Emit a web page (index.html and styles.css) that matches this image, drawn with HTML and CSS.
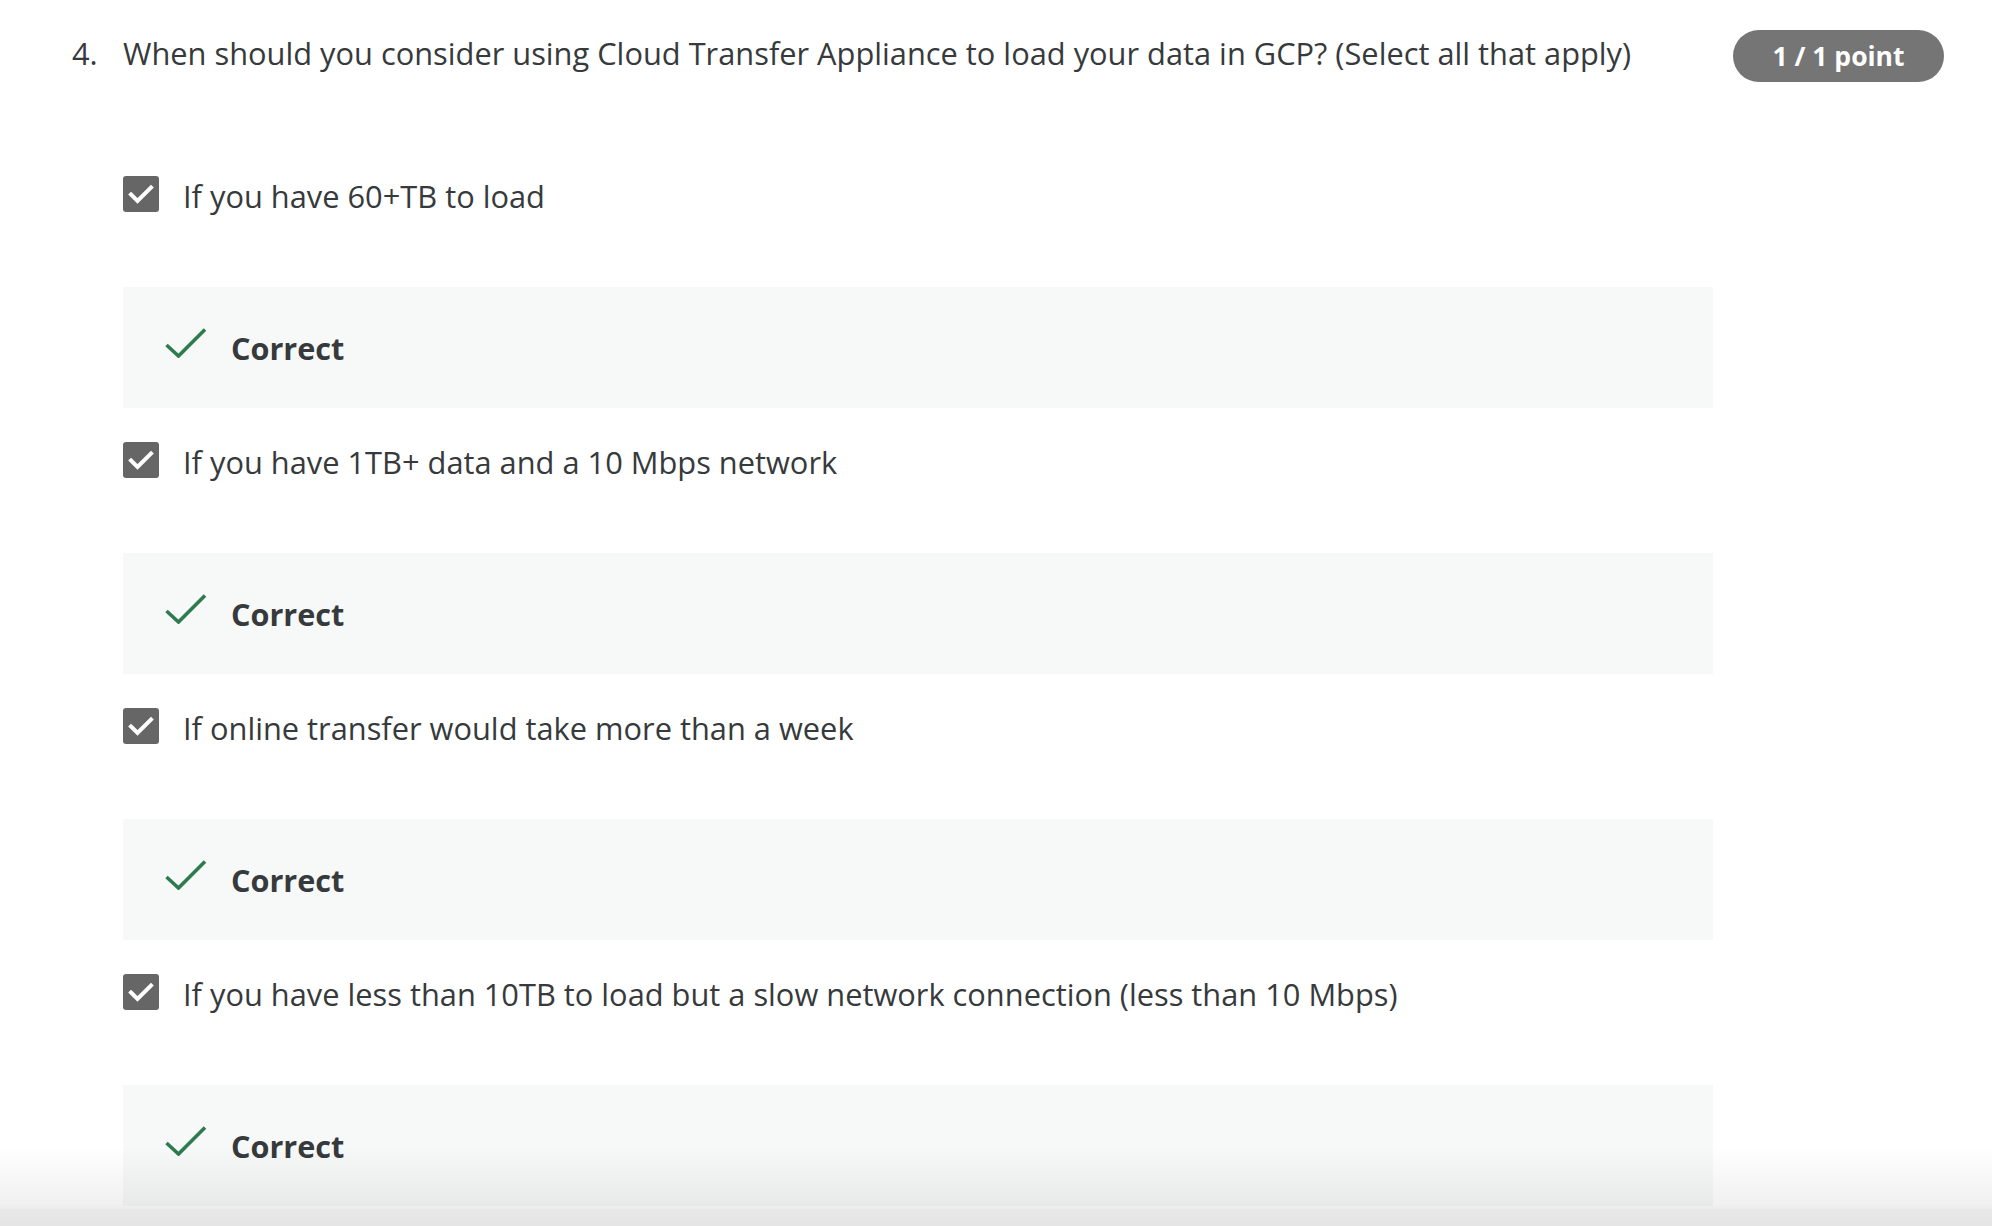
FILE: index.html
```html
<!DOCTYPE html>
<html>
<head>
<meta charset="utf-8">
<link rel="stylesheet" href="styles.css">
</head>
<body>
<div class="question">
  <div class="q-head">
    <div class="q-num">4.</div>
    <div class="q-text">When should you consider using Cloud Transfer Appliance to load your data in GCP? (Select all that apply)</div>
    <div class="badge">1 / 1 point</div>
  </div>
  <div class="options">
    <div class="group">
      <div class="option">
        <span class="cbox"><svg width="36" height="36" viewBox="0 0 36 36"><polyline points="8,18.5 14.5,25 28,11.5" fill="none" stroke="#fff" stroke-width="4" stroke-linecap="square"/></svg></span>
        <span class="opt-text">If you have 60+TB to load</span>
      </div>
      <div class="feedback">
        <svg class="tick" width="42" height="30" viewBox="0 0 42 30"><polyline points="1.5,17 13.5,28 40,1.5" fill="none" stroke="#2f7b50" stroke-width="3.6"/></svg>
        <span class="fb-text">Correct</span>
      </div>
    </div>
    <div class="group">
      <div class="option">
        <span class="cbox"><svg width="36" height="36" viewBox="0 0 36 36"><polyline points="8,18.5 14.5,25 28,11.5" fill="none" stroke="#fff" stroke-width="4" stroke-linecap="square"/></svg></span>
        <span class="opt-text">If you have 1TB+ data and a 10 Mbps network</span>
      </div>
      <div class="feedback">
        <svg class="tick" width="42" height="30" viewBox="0 0 42 30"><polyline points="1.5,17 13.5,28 40,1.5" fill="none" stroke="#2f7b50" stroke-width="3.6"/></svg>
        <span class="fb-text">Correct</span>
      </div>
    </div>
    <div class="group">
      <div class="option">
        <span class="cbox"><svg width="36" height="36" viewBox="0 0 36 36"><polyline points="8,18.5 14.5,25 28,11.5" fill="none" stroke="#fff" stroke-width="4" stroke-linecap="square"/></svg></span>
        <span class="opt-text">If online transfer would take more than a week</span>
      </div>
      <div class="feedback">
        <svg class="tick" width="42" height="30" viewBox="0 0 42 30"><polyline points="1.5,17 13.5,28 40,1.5" fill="none" stroke="#2f7b50" stroke-width="3.6"/></svg>
        <span class="fb-text">Correct</span>
      </div>
    </div>
    <div class="group">
      <div class="option">
        <span class="cbox"><svg width="36" height="36" viewBox="0 0 36 36"><polyline points="8,18.5 14.5,25 28,11.5" fill="none" stroke="#fff" stroke-width="4" stroke-linecap="square"/></svg></span>
        <span class="opt-text">If you have less than 10TB to load but a slow network connection (less than 10 Mbps)</span>
      </div>
      <div class="feedback">
        <svg class="tick" width="42" height="30" viewBox="0 0 42 30"><polyline points="1.5,17 13.5,28 40,1.5" fill="none" stroke="#2f7b50" stroke-width="3.6"/></svg>
        <span class="fb-text">Correct</span>
      </div>
    </div>
  </div>
</div>
<div class="bottom-fade"></div>
</body>
</html>
```

FILE: styles.css
```css
html, body {
  margin: 0;
  padding: 0;
  background: #fff;
  overflow: hidden;
  height: 1226px;
}
body {
  font-family: "Open Sans", "Noto Sans", sans-serif;
  color: #373a3c;
}
.question {
  padding: 30px 48px 0 72px;
}
.q-head {
  display: flex;
  align-items: flex-start;
}
.q-num {
  width: 51px;
  font-size: 30.8px;
  line-height: 46px;
  flex: none;
}
.q-text {
  flex: 1;
  font-size: 30.8px;
  line-height: 46px;
}
.badge {
  flex: none;
  width: 211px;
  height: 52px;
  border-radius: 26px;
  background: #757575;
  color: #fff;
  font-weight: 700;
  font-size: 26.5px;
  display: flex;
  align-items: center;
  justify-content: center;
}
.options {
  margin-top: 94px;
  padding-left: 51px;
  width: 1590px;
}
.group {
  margin-bottom: 34px;
}
.option {
  display: flex;
  align-items: center;
  height: 36px;
  gap: 24px;
}
.cbox {
  width: 36px;
  height: 36px;
  border-radius: 3px;
  background: #666;
  display: block;
  flex: none;
}
.cbox svg {
  display: block;
}
.opt-text {
  font-size: 30.8px;
  line-height: 36px;
  padding-top: 3px;
}
.feedback {
  margin-top: 75px;
  height: 121px;
  background: #f7f9f8;
  display: flex;
  align-items: center;
  padding-left: 42px;
  gap: 24px;
}
.tick {
  display: block;
  flex: none;
  margin-bottom: 10px;
}
.fb-text {
  font-size: 30.6px;
  font-weight: 700;
  color: #373a3c;
}
.bottom-fade {
  position: fixed;
  left: 0;
  right: 0;
  bottom: 0;
  height: 80px;
  background: linear-gradient(to bottom, rgba(0,0,0,0) 0%, rgba(0,0,0,0.06) 75%, rgba(0,0,0,0.09) 80%, rgba(0,0,0,0.1) 100%);
  pointer-events: none;
}
```
